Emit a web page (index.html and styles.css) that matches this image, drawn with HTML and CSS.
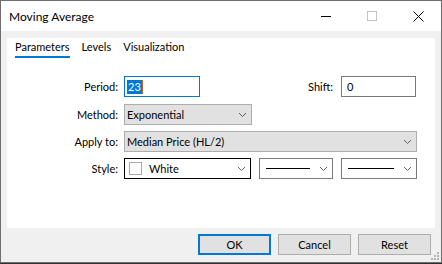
FILE: index.html
```html
<!DOCTYPE html>
<html>
<head>
    <meta charset="utf-8">
    <title>Moving Average</title>
    <link rel="stylesheet" href="styles.css">
</head>
<body>
  <div class="window">
    <div class="titlebar">
      <span class="title">Moving Average</span>
      <div class="ctl">
        <svg width="10" height="10" viewBox="0 0 10 10"><line x1="0" y1="5.5" x2="10" y2="5.5" stroke="#000" stroke-width="1"/></svg>
      </div>
      <div class="ctl">
        <svg width="10" height="10" viewBox="0 0 10 10"><rect x="0.5" y="0.5" width="9" height="9" fill="none" stroke="#c4c4c4" stroke-width="1"/></svg>
      </div>
      <div class="ctl">
        <svg width="11" height="11" viewBox="0 0 11 11"><path d="M0.5 0.5 L10.5 10.5 M10.5 0.5 L0.5 10.5" stroke="#000" stroke-width="1"/></svg>
      </div>
    </div>

    <div class="client">
      <div class="panel">
        <div class="tabs">
          <span class="tab active">Parameters</span>
          <span class="tab">Levels</span>
          <span class="tab">Visualization</span>
        </div>

        <div class="form">
          <div class="row first">
            <label class="lbl">Period:</label>
            <div class="edit period"><span class="hl">23</span><span class="caret"></span></div>
            <div class="spacer"></div>
            <label class="shift-lbl">Shift:</label>
            <div class="edit shift">0</div>
          </div>

          <div class="row">
            <label class="lbl">Method:</label>
            <div class="combo method">
              <span class="txt">Exponential</span>
              <svg class="chev" width="7" height="4" viewBox="0 0 7 4"><path d="M0 0 L3.5 3.5 L7 0" fill="none" stroke="#606060" stroke-width="1"/></svg>
            </div>
          </div>

          <div class="row">
            <label class="lbl">Apply to:</label>
            <div class="combo apply">
              <span class="txt">Median Price (HL/2)</span>
              <svg class="chev" width="7" height="4" viewBox="0 0 7 4"><path d="M0 0 L3.5 3.5 L7 0" fill="none" stroke="#606060" stroke-width="1"/></svg>
            </div>
          </div>

          <div class="row">
            <label class="lbl">Style:</label>
            <div class="combo white color">
              <span class="swatch"></span>
              <span class="txt">White</span>
              <svg class="chev" width="7" height="4" viewBox="0 0 7 4"><path d="M0 0 L3.5 3.5 L7 0" fill="none" stroke="#606060" stroke-width="1"/></svg>
            </div>
            <div class="combo white linestyle">
              <span class="line"></span>
              <svg class="chev" width="7" height="4" viewBox="0 0 7 4"><path d="M0 0 L3.5 3.5 L7 0" fill="none" stroke="#606060" stroke-width="1"/></svg>
            </div>
            <div class="combo white linewidth">
              <span class="line"></span>
              <svg class="chev" width="7" height="4" viewBox="0 0 7 4"><path d="M0 0 L3.5 3.5 L7 0" fill="none" stroke="#606060" stroke-width="1"/></svg>
            </div>
          </div>
        </div>
      </div>

      <div class="buttons">
        <div class="btn default">OK</div>
        <div class="btn">Cancel</div>
        <div class="btn">Reset</div>
      </div>
    </div>

    <svg class="grip" width="9" height="9" viewBox="0 0 9 9">
      <rect x="6" y="0" width="2" height="2" fill="#b4b4b4"/>
      <rect x="3" y="3" width="2" height="2" fill="#b4b4b4"/>
      <rect x="6" y="3" width="2" height="2" fill="#b4b4b4"/>
      <rect x="0" y="6" width="2" height="2" fill="#b4b4b4"/>
      <rect x="3" y="6" width="2" height="2" fill="#b4b4b4"/>
      <rect x="6" y="6" width="2" height="2" fill="#b4b4b4"/>
    </svg>
  </div>
</body>
</html>
```

FILE: styles.css
```css
body {
    margin: 0;
    background-color: #2e2e2e;
    font-family: Lato, "Liberation Sans", sans-serif;
    font-size: 11px;
    color: #000;
}

/* Ventana principal */
.window {
    position: relative;
    box-sizing: border-box;
    width: 442px;
    height: 263px;
    border: 1px solid #6e6e6e;
    background-color: #f0f0f0;
    display: flex;
    flex-direction: column;
}

.titlebar {
    height: 30px;
    flex-shrink: 0;
    background-color: #fff;
    display: flex;
    align-items: center;
    padding-left: 8px;
}

.title {
    flex: 1;
    font-size: 12px;
    padding-top: 1px;
}

.ctl {
    width: 46px;
    height: 30px;
    display: flex;
    align-items: center;
    justify-content: center;
}

.client {
    flex: 1;
    display: flex;
    flex-direction: column;
    padding: 7px 6px 0 6px;
}

.panel {
    height: 190px;
    background-color: #fff;
    padding-left: 8px;
}

/* Pestañas */
.tabs {
    display: flex;
    padding-top: 1px;
}

.tab {
    line-height: 16px;
    padding-bottom: 1px;
    border-bottom: 2px solid transparent;
    margin-right: 12px;
}

.tab.active {
    border-bottom-color: #0078d7;
}

/* Formulario */
.form {
    margin-top: 18px;
    padding-right: 18px;
}

.row {
    display: flex;
    align-items: center;
    height: 21px;
    margin-bottom: 6px;
}

.row.first {
    margin-bottom: 7px;
}

.lbl {
    width: 103px;
    text-align: right;
    margin-right: 6px;
}

.spacer {
    flex: 1;
}

.shift-lbl {
    margin-right: 8px;
}

.edit {
    box-sizing: border-box;
    height: 21px;
    border: 1px solid #7a7a7a;
    background-color: #fff;
    padding: 0 2px;
    display: flex;
    align-items: center;
}

.period {
    width: 76px;
    border-color: #0078d7;
}

.shift {
    width: 75px;
    margin-right: 1px;
    padding-left: 5px;
}

.hl {
    background-color: #0078d7;
    color: #fff;
    line-height: 14px;
    padding: 0 1px;
}

.caret {
    width: 1px;
    height: 14px;
    background-color: #c86a1e;
}

.combo {
    box-sizing: border-box;
    height: 21px;
    border: 1px solid #adadad;
    background-color: #e1e1e1;
    padding-left: 2px;
    display: flex;
    align-items: center;
}

.combo .txt {
    flex: 1;
}

.chev {
    margin-right: 5px;
    flex-shrink: 0;
}

.method {
    width: 128px;
}

.apply {
    flex: 1;
}

.combo.white {
    background-color: #fff;
    border-color: #7a7a7a;
}

.color {
    width: 127px;
    border-color: #000 !important;
}

.swatch {
    box-sizing: border-box;
    width: 13px;
    height: 13px;
    border: 1px solid #a8a8a8;
    margin-left: 2px;
    margin-right: 7px;
}

.linestyle {
    width: 74px;
    margin-left: 8px;
}

.linewidth {
    width: 76px;
    margin-left: 8px;
}

.line {
    flex: 1;
    height: 1px;
    background-color: #000;
    margin-left: 4px;
    margin-right: 10px;
}

/* Botones */
.buttons {
    display: flex;
    justify-content: flex-end;
    gap: 7px;
    margin-top: 6px;
    padding-right: 4px;
}

.btn {
    box-sizing: border-box;
    width: 73px;
    height: 21px;
    border: 1px solid #adadad;
    background-color: #e1e1e1;
    display: flex;
    align-items: center;
    justify-content: center;
}

.btn.default {
    border: 2px solid #0078d7;
}

.grip {
    position: absolute;
    right: 1px;
    bottom: 1px;
}
```
